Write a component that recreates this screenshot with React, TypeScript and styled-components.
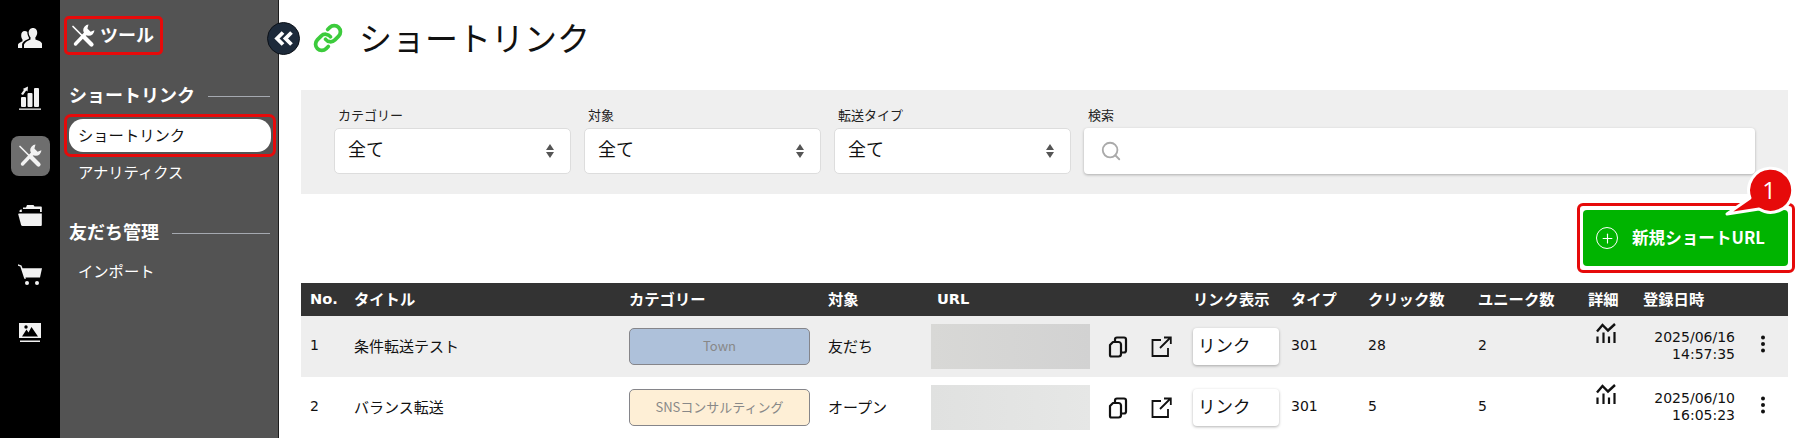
import React from "react";
import styled, { createGlobalStyle } from "styled-components";
import { Link, Search, Plus } from "lucide-react";

const Global = createGlobalStyle`
  html, body { margin: 0; padding: 0; height: 100%; overflow: hidden; background: #fff; }
  body { font-family: "DejaVu Sans", "Noto Sans CJK JP", sans-serif; color: #111; }
  * { box-sizing: border-box; }
`;

const RED = "#e60a0a";

const Page = styled.div`display: flex; height: 438px; width: 1810px; overflow: hidden;`;

const Rail = styled.nav`
  width: 60px; flex: none; background: #000; color: #f2f2f2;
  display: flex; flex-direction: column; align-items: center; gap: 19px; padding-top: 18px;
`;
const RailItem = styled.div<{ $active?: boolean }>`
  width: 39px; height: 40px; border-radius: 8px; display: flex; align-items: center; justify-content: center;
  background: ${(p) => (p.$active ? "#6e6e6e" : "transparent")};
`;

const Sidebar = styled.aside`
  position: relative; width: 219px; flex: none; background: #535353; border-right: 1px solid #1c1c1c;
  padding: 16px 2px 0 4px; color: #fff; font-family: "Noto Sans CJK JP", sans-serif;
`;
const SideTitle = styled.div`
  display: inline-flex; align-items: center; gap: 5px; height: 39px; padding: 0 6px 4px 4px;
  border: 3px solid ${RED}; border-radius: 5px; font-size: 18px; font-weight: 700; color: #fff;
  svg { margin-top: 4px; }
`;
const Collapse = styled.button`
  position: absolute; top: 22px; right: -22px; width: 33px; height: 33px; padding: 0; border-radius: 50%;
  background: #1d2a3a; border: 1px solid #0c1118; color: #fff; display: flex; align-items: center; justify-content: center;
`;
const SectionHead = styled.div<{ $first?: boolean }>`
  display: flex; align-items: center; gap: 13px; height: 24px; padding: 0 6px 3px 5px;
  margin-top: ${(p) => (p.$first ? "28px" : "33px")};
  font-size: 18px; font-weight: 700; white-space: nowrap;
  &::after { content: ""; flex: 1; height: 1px; background: #a5a9b0; margin-top: 6px; }
`;
const ActiveRing = styled.div`
  margin-top: 7px; height: 43px; padding: 2px; border: 3px solid ${RED}; border-radius: 7px;
`;
const ActivePill = styled.div`
  height: 33px; border-radius: 14px; background: #fff; color: #111; font-size: 15.3px;
  display: flex; align-items: center; padding: 0 0 3px 9px;
`;
const SideLink = styled.div<{ $gap?: number }>`
  height: 30px; display: flex; align-items: center; padding: 0 0 3px 14px; font-size: 15.3px; color: #fff;
  margin-top: ${(p) => p.$gap ?? 0}px;
`;

const Main = styled.main`flex: 1; min-width: 0; padding: 0 22px;`;
const TitleRow = styled.header`height: 90px; display: flex; align-items: flex-start; padding: 15px 0 0 12px; gap: 16px;`;
const PageTitle = styled.h1`
  margin: 0; font-size: 33px; line-height: 44px; font-weight: 400; color: #111; font-family: "Noto Sans CJK JP", sans-serif;
`;
const LinkMark = styled.span`color: #3ccb3c; display: flex; margin-top: 8px;`;

const Filters = styled.section`
  height: 104px; background: #efefef; padding: 17px 33px 0;
  display: grid; grid-template-columns: 237px 237px 237px 1fr; column-gap: 13px;
`;
const Label = styled.div`
  font-size: 13px; line-height: 16px; height: 21px; padding-left: 4px; color: #222; font-family: "Noto Sans CJK JP", sans-serif;
`;
const Select = styled.div`
  height: 46px; background: #fff; border: 1px solid #ddd; border-radius: 5px; padding: 0 16px 7px 13px;
  display: flex; align-items: center; justify-content: space-between; font-size: 18px; font-family: "Noto Sans CJK JP", sans-serif;
`;
const Arrows = styled.svg`width: 8px; height: 16px; margin-top: 6px; color: #555;`;
const SearchBox = styled.div`
  height: 46px; background: #fff; border-radius: 4px; box-shadow: 0 1px 3px rgba(0,0,0,.28);
  display: flex; align-items: center; padding: 0 0 0 16px; color: #aaa;
`;

const ActionRow = styled.div`display: flex; justify-content: flex-end; margin: 16px 0 17px;`;
const NewButton = styled.button`
  position: relative; width: 205px; height: 56px; border: 0; border-radius: 4px; background: #00b400; color: #fff;
  display: flex; align-items: center; gap: 14px; padding: 0 0 3px 13px;
  font: 700 16.6px "Noto Sans CJK JP", sans-serif;
  white-space: nowrap;
  &::before {
    content: ""; position: absolute; inset: -7px -7px -7px -6px; border: 3px solid ${RED}; border-radius: 6px; pointer-events: none;
  }
`;
const PlusRing = styled.span`
  width: 22px; height: 22px; border-radius: 50%; border: 1.5px solid #fff; display: flex; align-items: center; justify-content: center;
  margin-top: 3px;
`;
const Callout = styled.svg`position: absolute; left: 140px; top: -46px; width: 76px; height: 60px; overflow: visible;`;
const CalloutNum = styled.span`
  position: absolute; left: 173px; top: -36px; width: 26px; text-align: center; color: #fff;
  font: 400 24px/32px "Open Sans", sans-serif;
`;

const Table = styled.table`width: 100%; border-collapse: collapse; table-layout: fixed;`;
const HeadRow = styled.tr`height: 33px; background: #333;`;
const Th = styled.th<{ $latin?: boolean; $inset?: number }>`
  padding: 0 0 3px ${(p) => p.$inset ?? 9}px; text-align: left; color: #fff;
  font-size: ${(p) => (p.$latin ? "14.6px" : "15.3px")}; font-weight: 700; white-space: nowrap; overflow: visible;
`;
const Row = styled.tr<{ $shade?: boolean }>`height: 61px; background: ${(p) => (p.$shade ? "#eee" : "#fff")};`;
const Td = styled.td`padding: 0 0 0 9px; font-size: 14px; color: #111; vertical-align: middle; white-space: nowrap;`;
const TextTd = styled(Td)`padding-bottom: 3px; font-size: 15px;`;
const NumTd = styled(Td)`padding-bottom: 3px; font-size: 14px;`;
const CategoryTag = styled.div<{ $bg: string }>`
  width: 181px; height: 37px; border: 1px solid #85858a; border-radius: 5px; background: ${(p) => p.$bg}; padding-bottom: 2px;
  color: #888; font: 400 13px "Noto Sans CJK JP", sans-serif; display: flex; align-items: center; justify-content: center;
`;
const UrlCell = styled.div`display: flex; align-items: center;`;
const UrlMask = styled.div<{ $from: string; $to: string }>`
  width: 159px; height: 45px; background: linear-gradient(90deg, ${(p) => p.$from}, ${(p) => p.$to});
`;
const IconBtn = styled.span<{ $ml: number }>`display: flex; margin-left: ${(p) => p.$ml}px; color: #111;`;
const LinkSelect = styled.div`
  width: 86px; height: 37px; background: #fff; border-radius: 4px; box-shadow: 0 1px 3px rgba(0,0,0,.3);
  font-size: 17.5px; padding: 0 0 4px 5px; display: flex; align-items: center;
`;
const DateCell = styled.div`text-align: right; font-size: 14px; line-height: 17px; margin-top: -1px; width: 92px;`;
const Graph = styled.span`display: flex; margin: -24px 0 0 8px;`;
const Kebab = styled.span`display: flex; margin: -6px 0 0 6px;`;

const ToolsIcon = ({ size = 24 }: { size?: number }) => (
  <svg width={size} height={size} viewBox="0 0 24 24" fill="currentColor" stroke="none">
    <g stroke="currentColor" strokeLinecap="round">
      <line x1="2" y1="2.5" x2="12" y2="12.5" strokeWidth="1.7" />
      <line x1="13.5" y1="13.5" x2="20.5" y2="20.5" strokeWidth="4.2" />
      <line x1="4.5" y1="20" x2="14.5" y2="9.5" strokeWidth="3.4" />
    </g>
    <path d="M17.5 .6A5.6 5.6 0 1 0 23.4 6.3L19.6 7.8 16.4 4.6Z" />
  </svg>
);
const UsersIcon = () => (
  <svg width="24" height="20" viewBox="0 0 24 20" fill="currentColor">
    <path d="M15 0c2.8 0 4.4 2.2 4.2 5-.1 1.700-.8 3.200-1.800 4.300v2.300c2.600.8 5.800 2 6.600 3.900V20H6v-3.500c.9-2 3.900-3.900 6.500-4.900V9.300C11.500 8.200 10.800 6.700 10.700 5 10.500 2.200 12.200 0 15 0z" />
    <path d="M6.800 3c1 0 1.900.4 2.500 1 0 2 .6 4 1.600 5.500v1.200c-2 .8-4.600 2-5.900 3.700-.4.500-.7 1.100-.9 1.600V20H0v-3.500c.6-1.400 2.500-2.400 4.500-3.200V11.500C3.700 10.500 3.200 9.300 3.200 7.800 3 5 4.500 3 6.800 3z" />
  </svg>
);
const ChartIcon = () => (
  <svg width="22" height="25" viewBox="0 0 22 25" fill="currentColor">
    <rect x="2" y="12" width="5" height="10" rx="1" />
    <rect x="8.500" y="8" width="5" height="14" rx="1" />
    <rect x="15" y="3" width="5" height="19" rx="1" />
    <path d="M2 9l3-4.200-1.300-.9L9 1.500 8.500 6.500l-1.300-.9L4 10z" />
    <rect x="0" y="23.500" width="22" height="1.300" />
  </svg>
);
const FolderIcon = () => (
  <svg width="24" height="21" viewBox="0 0 24 21" fill="currentColor">
    <path d="M9 0h6.500l1 1.500H23a.8.8 0 0 1 .8.800V7H22V4H5V2.500H8z" />
    <path d="M1 8.500h22.800V20a1 1 0 0 1-1 1H4.500a1.500 1.500 0 0 1-1.400-1.100L.3 9.500a.8.8 0 0 1 .7-1z" />
    <path d="M3 4.500h.8V7H1.500V6A1.500 1.500 0 0 1 3 4.500z" />
  </svg>
);
const CartIcon = () => (
  <svg width="24" height="21" viewBox="0 0 24 21" fill="currentColor">
    <path d="M0 .3 3.500 1.500l1 2.700H24l-2 9.300H7.500l.5 1.300h-1.700L2.300 2.500 0 1.700z" />
    <circle cx="9" cy="19" r="2" />
    <circle cx="19" cy="19" r="2" />
  </svg>
);
const ImageIcon = () => (
  <svg width="22" height="20" viewBox="0 0 22 20" fill="currentColor">
    <path d="M0 0h22v15H0z" />
    <path d="M3 13.500l4.500-7 2 3 3-5.500 6.500 9.500z" fill="#000" />
    <circle cx="7" cy="4" r="1.700" fill="#000" />
    <rect x="1" y="17.500" width="20" height="1.500" />
  </svg>
);
const CopyIcon = () => (
  <svg width="20" height="22" viewBox="0 0 20 22" fill="none" stroke="currentColor" strokeWidth="2.200" strokeLinejoin="round">
    <path d="M7 5V3.500A2 2 0 0 1 9 1.500h7A2 2 0 0 1 18 3.500v11a2 2 0 0 1-2 2h-2" />
    <path d="M5 6h5.500a2.500 2.500 0 0 1 2.500 2.500V18a2.500 2.500 0 0 1-2.500 2.500H3.500A1.500 1.500 0 0 1 2 19v-10z" />
  </svg>
);
const OpenIcon = () => (
  <svg width="21" height="21" viewBox="0 0 21 21" fill="none" stroke="currentColor" strokeWidth="1.800">
    <path d="M10 4H1.500v16H17v-8" />
    <path d="M9 12 19.500 1.500M13 1.500h6.800V8" />
  </svg>
);
const GraphIcon = () => (
  <svg width="20" height="20" viewBox="0 0 20 20" fill="none" stroke="#111">
    <path d="M1 8.500 6.500 2 12 7.500 19 1" strokeWidth="2.400" />
    <path d="M1.500 13.500V20M7.500 9.500V20M13 13.500V20M18.500 9V20" strokeWidth="2.200" />
  </svg>
);
const DotsIcon = () => (
  <svg width="6" height="18" viewBox="0 0 6 18" fill="#111">
    <circle cx="3" cy="2.500" r="2" /><circle cx="3" cy="9" r="2" /><circle cx="3" cy="15.500" r="2" />
  </svg>
);
const DoubleChevron = () => (
  <svg width="19" height="15" viewBox="0 0 19 15" fill="none" stroke="currentColor" strokeWidth="3.800" strokeLinejoin="miter">
    <path d="M9 1.500 3 7.500l6 6M17.500 1.500l-6 6 6 6" />
  </svg>
);

const FilterSelect = ({ label }: { label: string }) => (
  <div>
    <Label>{label}</Label>
    <Select>
      全て
      <Arrows viewBox="0 0 8 16" fill="currentColor">
        <path d="M4 1 8 7H0zM4 15 0 9h8z" />
      </Arrows>
    </Select>
  </div>
);

const rows = [
  { no: 1, title: "条件転送テスト", cat: "Town", bg: "#aec1da", target: "友だち", from: "#d8d8d6", to: "#d2d2d2", click: 28, uniq: 2, d: "2025/06/16", t: "14:57:35" },
  { no: 2, title: "バランス転送", cat: "SNSコンサルティング", bg: "#feefd6", target: "オープン", from: "#e0e1e0", to: "#e6e7e6", click: 5, uniq: 5, d: "2025/06/10", t: "16:05:23" },
];
const widths = [44, 275, 199, 103, 262, 98, 77, 110, 110, 55, 111, 43];
const heads = ["No.", "タイトル", "カテゴリー", "対象", "URL", "リンク表示", "タイプ", "クリック数", "ユニーク数", "詳細", "登録日時", ""];

export default function App() {
  return (
    <Page>
      <Global />
      <Rail>
        <RailItem><UsersIcon /></RailItem>
        <RailItem><ChartIcon /></RailItem>
        <RailItem $active><ToolsIcon /></RailItem>
        <RailItem><FolderIcon /></RailItem>
        <RailItem><CartIcon /></RailItem>
        <RailItem><ImageIcon /></RailItem>
      </Rail>
      <Sidebar>
        <SideTitle><ToolsIcon />ツール</SideTitle>
        <Collapse aria-label="collapse"><DoubleChevron /></Collapse>
        <SectionHead $first>ショートリンク</SectionHead>
        <ActiveRing><ActivePill>ショートリンク</ActivePill></ActiveRing>
        <SideLink>アナリティクス</SideLink>
        <SectionHead>友だち管理</SectionHead>
        <SideLink $gap={12}>インポート</SideLink>
      </Sidebar>
      <Main>
        <TitleRow>
          <LinkMark><Link size={30} strokeWidth={3} /></LinkMark>
          <PageTitle>ショートリンク</PageTitle>
        </TitleRow>
        <Filters>
          <FilterSelect label="カテゴリー" />
          <FilterSelect label="対象" />
          <FilterSelect label="転送タイプ" />
          <div>
            <Label>検索</Label>
            <SearchBox><Search size={22} strokeWidth={2} /></SearchBox>
          </div>
        </Filters>
        <ActionRow>
          <NewButton>
            <PlusRing><Plus size={15} strokeWidth={1.8} /></PlusRing>
            新規ショートURL
            <Callout viewBox="0 0 76 60">
              <path d="M27 34A22 22 0 1 1 36 45L4 50Z" fill="#e60a0a" stroke="#fff" strokeWidth="3" strokeLinejoin="round" />
            </Callout>
            <CalloutNum>1</CalloutNum>
          </NewButton>
        </ActionRow>
        <Table>
          <colgroup>{widths.map((w, i) => <col key={i} width={w} />)}</colgroup>
          <thead>
            <HeadRow>
              {heads.map((h, i) => (
                <Th key={i} $latin={h === "No." || h === "URL"} $inset={h === "URL" ? 15 : 9}>{h}</Th>
              ))}
            </HeadRow>
          </thead>
          <tbody>
            {rows.map((r) => (
              <Row key={r.no} $shade={r.no === 1}>
                <NumTd>{r.no}</NumTd>
                <TextTd>{r.title}</TextTd>
                <Td><CategoryTag $bg={r.bg}>{r.cat}</CategoryTag></Td>
                <TextTd>{r.target}</TextTd>
                <Td>
                  <UrlCell>
                    <UrlMask $from={r.from} $to={r.to} />
                    <IconBtn $ml={18}><CopyIcon /></IconBtn>
                    <IconBtn $ml={23}><OpenIcon /></IconBtn>
                  </UrlCell>
                </Td>
                <Td><LinkSelect>リンク</LinkSelect></Td>
                <NumTd>301</NumTd>
                <NumTd>{r.click}</NumTd>
                <NumTd>{r.uniq}</NumTd>
                <Td><Graph><GraphIcon /></Graph></Td>
                <Td><DateCell>{r.d}<br />{r.t}</DateCell></Td>
                <Td><Kebab><DotsIcon /></Kebab></Td>
              </Row>
            ))}
          </tbody>
        </Table>
      </Main>
    </Page>
  );
}
